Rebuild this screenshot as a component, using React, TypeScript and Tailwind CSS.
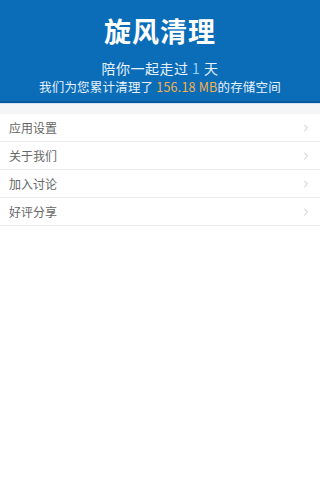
import { ChevronRight } from "lucide-react";

const items = ["应用设置", "关于我们", "加入讨论", "好评分享"];

export default function App() {
  return (
    <div
      className="w-[320px] h-[480px] bg-white overflow-hidden"
      style={{ fontFamily: '"Noto Sans CJK SC", "Noto Sans", sans-serif' }}
    >
      {/* header */}
      <div className="bg-[#0b6db8] h-[103px] flex flex-col items-center text-white border-b-[2px] border-[#07589a]">
        <div className="mt-[13px] text-[27px] leading-[36px] font-bold tracking-[1px]">旋风清理</div>
        <div className="mt-[9px] text-[14px] leading-[20px] tracking-[0.5px] text-[#e8f2fb]">
          陪你一起走过 <span className="text-[#8fd3ff]">1</span> 天
        </div>
        <div className="mt-[0px] text-[12.5px] leading-[17px] tracking-[0.2px] text-[#e8f2fb]">
          我们为您累计清理了 <span className="text-[#f5b04a]">156.18 MB</span>的存储空间
        </div>
      </div>
      <div className="h-[11px] bg-[#f3f5f6] border-t border-[#cfe3f2]" />

      {/* menu */}
      <div className="flex flex-col">
        {items.map((t) => (
          <div
            key={t}
            className="h-[28px] flex items-center justify-between pl-[9px] pr-[8px] border-b border-[#ececec]"
          >
            <span className="text-[12px] leading-[16px] text-[#666]">{t}</span>
            <ChevronRight size={12} strokeWidth={1.5} className="text-[#b0b0b0]" />
          </div>
        ))}
      </div>
    </div>
  );
}
